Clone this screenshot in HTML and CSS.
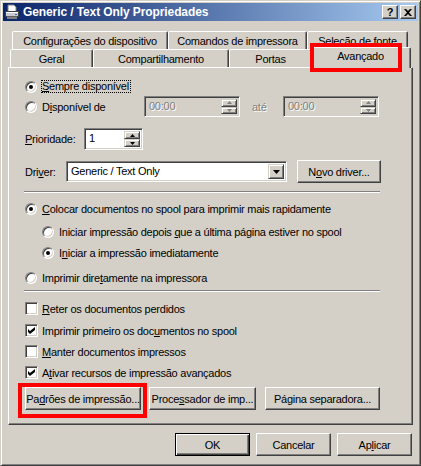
FILE: index.html
```html
<!DOCTYPE html>
<html lang="pt-BR">
<head>
    <meta charset="UTF-8">
    <title>Generic / Text Only Propriedades</title>
    <link rel="stylesheet" href="styles.css">
</head>
<body>
<div class="window">
    <div class="titlebar">
        <svg class="app-icon" width="16" height="16" viewBox="0 0 16 16">
            <path d="M4 1h6l2 2v5H4z" fill="#fff" stroke="#808080"/>
            <path d="M1.5 7.5h13v5h-13z" fill="#c8c8d0" stroke="#404040"/>
            <path d="M2 8h12v1H2z" fill="#fff"/>
            <path d="M3 12.5h10v2.5H3z" fill="#808080"/>
            <path d="M11 10h2v1h-2z" fill="#3a6ea5"/>
        </svg>
        <span class="title">Generic / Text Only Propriedades</span>
        <div class="cap-btn cap-help">?</div>
        <div class="cap-btn">
            <svg width="8" height="7" viewBox="0 0 8 7"><path d="M0 0h2l2 2 2-2h2L5 3.5 8 7H6L4 5 2 7H0l3-3.5z" fill="#000"/></svg>
        </div>
    </div>

    <div class="dialog">
        <div class="tabs tabs-back">
            <div class="tab t-config">Configurações do dispositivo</div>
            <div class="tab t-cmd">Comandos de impressora</div>
            <div class="tab t-font">Seleção de fonte</div>
        </div>
        <div class="tabs tabs-front">
            <div class="tab t-geral">Geral</div>
            <div class="tab t-share">Compartilhamento</div>
            <div class="tab t-ports">Portas</div>
            <div class="tab t-adv active">Avançado<span class="highlight hl-tab"></span></div>
        </div>

        <div class="panel">
            <div class="row row-first">
                <span class="radio on"></span>
                <span class="label focus"><u>S</u>empre disponível</span>
            </div>
            <div class="row row-time">
                <span class="radio"></span>
                <span class="label time-label">D<u>i</u>sponível de</span>
                <div class="field spin time-field disabled">
                    <span class="field-text">00:00</span>
                    <div class="spin-btns">
                        <div class="spin-btn"><svg width="5" height="3" viewBox="0 0 5 3"><path d="M2.5 0L5 3H0z" fill="#808080"/></svg></div>
                        <div class="spin-btn"><svg width="5" height="3" viewBox="0 0 5 3"><path d="M0 0h5L2.5 3z" fill="#808080"/></svg></div>
                    </div>
                </div>
                <span class="until disabled-text">até</span>
                <div class="field spin time-field disabled">
                    <span class="field-text">00:00</span>
                    <div class="spin-btns">
                        <div class="spin-btn"><svg width="5" height="3" viewBox="0 0 5 3"><path d="M2.5 0L5 3H0z" fill="#808080"/></svg></div>
                        <div class="spin-btn"><svg width="5" height="3" viewBox="0 0 5 3"><path d="M0 0h5L2.5 3z" fill="#808080"/></svg></div>
                    </div>
                </div>
            </div>
            <div class="row row-priority">
                <span class="field-label prio-label"><u>P</u>rioridade:</span>
                <div class="field spin prio-field">
                    <span class="field-text">1</span>
                    <div class="spin-btns">
                        <div class="spin-btn"><svg width="5" height="3" viewBox="0 0 5 3"><path d="M2.5 0L5 3H0z" fill="#000"/></svg></div>
                        <div class="spin-btn"><svg width="5" height="3" viewBox="0 0 5 3"><path d="M0 0h5L2.5 3z" fill="#000"/></svg></div>
                    </div>
                </div>
            </div>
            <div class="row row-driver">
                <span class="field-label driver-label">Dri<u>v</u>er:</span>
                <div class="field select">
                    <span class="field-text">Generic / Text Only</span>
                    <div class="select-btn"><svg width="7" height="4" viewBox="0 0 7 4"><path d="M0 0h7L3.5 4z" fill="#000"/></svg></div>
                </div>
                <div class="btn btn-driver">N<u>o</u>vo driver...</div>
            </div>

            <div class="separator sep-1"></div>

            <div class="row opt row-spool">
                <span class="radio on"></span>
                <span class="label"><u>C</u>olocar documentos no spool para imprimir mais rapidamente</span>
            </div>
            <div class="row opt sub row-after">
                <span class="radio"></span>
                <span class="label">Iniciar impressão depois <u>q</u>ue a última página estiver no spool</span>
            </div>
            <div class="row opt sub row-now">
                <span class="radio on"></span>
                <span class="label">I<u>n</u>iciar a impressão imediatamente</span>
            </div>
            <div class="row opt row-direct">
                <span class="radio"></span>
                <span class="label">Imprimir dire<u>t</u>amente na impressora</span>
            </div>

            <div class="separator sep-2"></div>

            <div class="row check-row first-check">
                <span class="check"></span>
                <span class="label"><u>R</u>eter os documentos perdidos</span>
            </div>
            <div class="row check-row second-check">
                <span class="check on"><svg width="7" height="7" viewBox="0 0 7 7"><path d="M0 2l2 2 5-4v3L2 7 0 5z" fill="#000"/></svg></span>
                <span class="label">Imprimir primeiro os doc<u>u</u>mentos no spool</span>
            </div>
            <div class="row check-row">
                <span class="check"></span>
                <span class="label"><u>M</u>anter documentos impressos</span>
            </div>
            <div class="row check-row">
                <span class="check on"><svg width="7" height="7" viewBox="0 0 7 7"><path d="M0 2l2 2 5-4v3L2 7 0 5z" fill="#000"/></svg></span>
                <span class="label">A<u>t</u>ivar recursos de impressão avançados</span>
            </div>

            <div class="row row-buttons">
                <div class="btn btn-defaults">Pa<u>d</u>rões de impressão...<span class="highlight hl-btn"></span></div>
                <div class="btn btn-processor">Proce<u>s</u>sador de imp...</div>
                <div class="btn btn-separator">Página separadora...</div>
            </div>
        </div>

        <div class="dialog-buttons">
            <div class="btn btn-lg default">OK</div>
            <div class="btn btn-lg">Cancelar</div>
            <div class="btn btn-lg">Ap<u>l</u>icar</div>
        </div>
    </div>
</div>
</body>
</html>
```

FILE: styles.css
```css
* {
    box-sizing: border-box;
}
body {
    margin: 0;
    background-color: #d4d0c8;
    font-family: "Liberation Sans", Arial, sans-serif;
    font-size: 11px;
    letter-spacing: -0.25px;
    color: #000;
}
u {
    text-decoration: underline;
}

/* window frame */
.window {
    width: 421px;
    height: 466px;
    padding: 2px;
    border: 1px solid;
    border-color: #d4d0c8 #404040 #404040 #d4d0c8;
    box-shadow: inset 1px 1px #fff, inset -1px -1px #808080;
}
.titlebar {
    display: flex;
    align-items: center;
    height: 18px;
    padding: 0 2px 0 1px;
    background: linear-gradient(to right, #0a246a, #a6caf0);
    color: #fff;
}
.app-icon {
    margin-right: 3px;
    flex-shrink: 0;
}
.title {
    flex: 1;
    font-size: 12px;
    font-weight: bold;
    letter-spacing: -0.1px;
    white-space: nowrap;
}
.cap-btn {
    display: flex;
    align-items: center;
    justify-content: center;
    width: 16px;
    height: 14px;
    background-color: #d4d0c8;
    border: 1px solid;
    border-color: #fff #404040 #404040 #fff;
    box-shadow: inset -1px -1px #808080;
    color: #000;
}
.cap-help {
    margin-right: 2px;
    font-weight: bold;
    font-size: 11px;
    letter-spacing: 0;
}

.dialog {
    padding: 10px 5px 0 5px;
}

/* tabs */
.tabs {
    display: flex;
    height: 18px;
}
.tabs-back {
    padding-left: 4px;
}
.tabs-front {
    padding-left: 2px;
    align-items: flex-end;
}
.tab {
    height: 18px;
    padding-top: 2px;
    line-height: 15px;
    text-align: center;
    white-space: nowrap;
    background-color: #d4d0c8;
    border: 1px solid;
    border-bottom: none;
    border-color: #fff #404040 transparent #fff;
    border-radius: 2px 2px 0 0;
    box-shadow: inset -1px 0 #808080;
}
.t-config { width: 156px; }
.t-cmd { width: 139px; }
.t-font { width: 101px; }
.t-geral { width: 83px; }
.t-share { width: 136px; }
.t-ports { width: 83px; }
.t-adv {
    width: 101px;
    margin-left: -2px;
}
.tab.active {
    position: relative;
    z-index: 1;
    height: 21px;
    margin-bottom: -1px;
    padding-top: 1px;
}

/* red highlight boxes */
.highlight {
    position: absolute;
    border: 4px solid #f00;
    pointer-events: none;
}
.hl-tab {
    left: -1px;
    top: -5px;
    width: 92px;
    height: 29px;
}
.hl-btn {
    left: -8px;
    top: -5px;
    width: 129px;
    height: 35px;
}

/* property page */
.panel {
    height: 358px;
    padding: 9px 0 0 16px;
    border: 1px solid;
    border-color: #fff #404040 #404040 #fff;
    box-shadow: inset -1px -1px #808080;
}
.row {
    display: flex;
    align-items: center;
    white-space: nowrap;
}
.row-first { height: 19px; }
.row-time { height: 21px; }
.row-priority {
    height: 22px;
    margin-top: 11px;
}
.row-driver {
    height: 23px;
    margin-top: 10px;
}
.row-spool { margin-top: 6px; }
.row-after { margin-top: 4px; }
.row-now { margin-top: 2px; }
.row-direct { margin-top: 6px; }
.opt { height: 19px; }
.sub { padding-left: 17px; }
.check-row { height: 21px; }
.first-check { margin-top: 6px; }
.second-check { margin-top: 1px; }
.row-buttons {
    height: 23px;
    margin-top: 4px;
}

.separator {
    width: 356px;
    margin-left: -1px;
    height: 2px;
    border-top: 1px solid #808080;
    border-bottom: 1px solid #fff;
}
.sep-1 { margin-top: 8px; }
.sep-2 { margin-top: 3px; }

.radio {
    position: relative;
    flex-shrink: 0;
    width: 12px;
    height: 12px;
    margin-right: 5px;
    border-radius: 50%;
    background-color: #fff;
    border: 1px solid;
    border-color: #808080 #fff #fff #808080;
    box-shadow: inset 1px 1px #404040, inset -1px -1px #d4d0c8;
}
.radio.on::after {
    content: "";
    position: absolute;
    left: 3px;
    top: 3px;
    width: 4px;
    height: 4px;
    border-radius: 50%;
    background-color: #000;
}
.check {
    display: flex;
    align-items: center;
    justify-content: center;
    flex-shrink: 0;
    width: 13px;
    height: 13px;
    margin-right: 4px;
    background-color: #fff;
    border: 1px solid;
    border-color: #808080 #fff #fff #808080;
    box-shadow: inset 1px 1px #404040, inset -1px -1px #d4d0c8;
}
.label.focus {
    margin-left: -1px;
    padding-right: 1px;
    line-height: 11px;
    border: 1px dotted #000;
}
.time-label { width: 102px; }
.until {
    width: 31px;
    margin-left: 12px;
}
.disabled-text,
.disabled .field-text {
    color: #808080;
    text-shadow: 1px 1px #fff;
}
.prio-label { width: 59px; }
.driver-label { width: 41px; }

/* sunken fields */
.field {
    display: flex;
    height: 21px;
    padding: 2px;
    background-color: #fff;
    border: 1px solid;
    border-color: #808080 #fff #fff #808080;
    box-shadow: inset 1px 1px #404040, inset -1px -1px #d4d0c8;
}
.field.disabled {
    background-color: #d4d0c8;
}
.field-text {
    flex: 1;
    padding-left: 2px;
    line-height: 15px;
}
.time-field { width: 96px; }
.prio-field {
    width: 59px;
    height: 22px;
}
.spin-btns {
    display: flex;
    flex-direction: column;
    width: 16px;
}
.spin-btn,
.select-btn {
    display: flex;
    align-items: center;
    justify-content: center;
    flex: 1;
    background-color: #d4d0c8;
    border: 1px solid;
    border-color: #d4d0c8 #404040 #404040 #d4d0c8;
    box-shadow: inset 1px 1px #fff, inset -1px -1px #808080;
}
.select {
    width: 221px;
}
.select .field-text {
    padding-left: 2px;
}
.select-btn {
    flex: none;
    width: 16px;
}

/* push buttons */
.btn {
    position: relative;
    display: flex;
    align-items: center;
    justify-content: center;
    height: 23px;
    white-space: nowrap;
    background-color: #d4d0c8;
    border: 1px solid;
    border-color: #fff #404040 #404040 #fff;
    box-shadow: inset -1px -1px #808080;
}
.btn-driver {
    width: 84px;
    margin-left: 10px;
}
.btn-defaults { width: 116px; }
.btn-processor {
    width: 107px;
    margin-left: 8px;
}
.btn-separator {
    width: 115px;
    margin-left: 9px;
}
.dialog-buttons {
    display: flex;
    justify-content: flex-end;
    gap: 6px;
    margin-top: 8px;
    padding-right: 1px;
}
.btn-lg { width: 75px; }
.btn.default {
    border-color: #000;
    box-shadow: inset 1px 1px #fff, inset -1px -1px #404040, inset -2px -2px #808080;
}
```
